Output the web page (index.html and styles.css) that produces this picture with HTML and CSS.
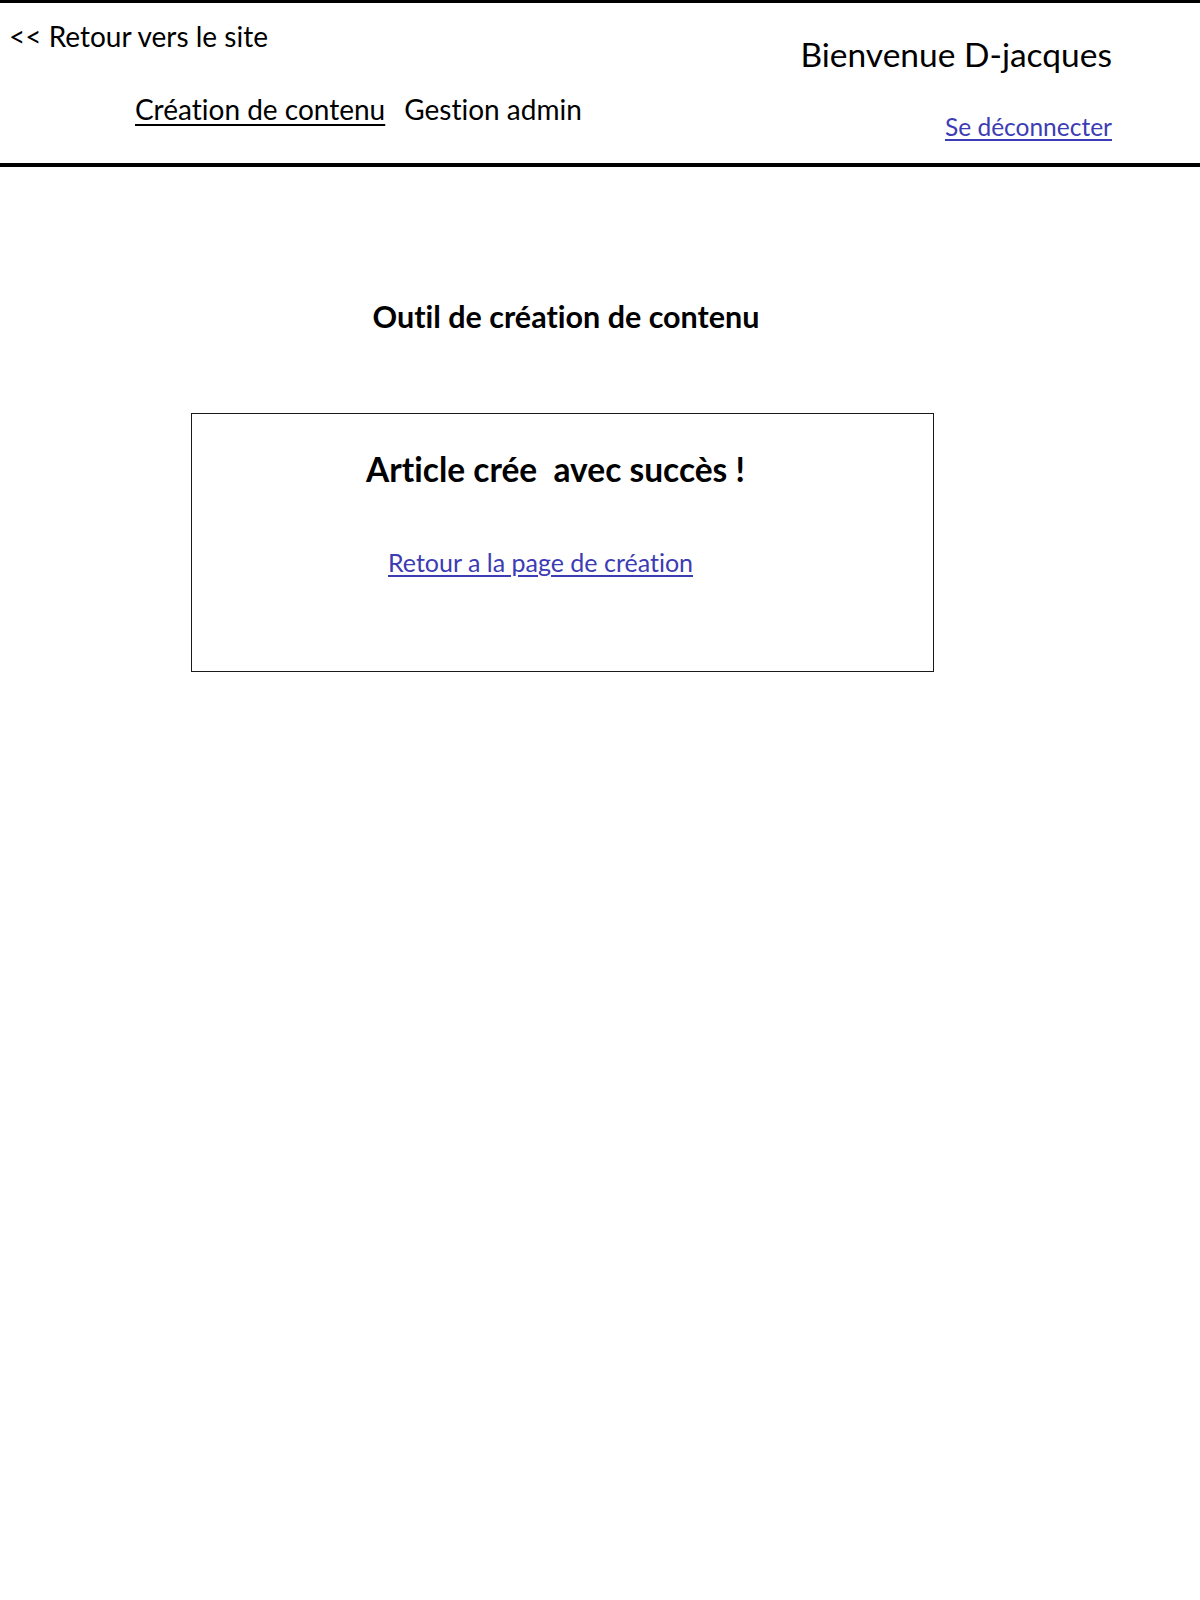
FILE: index.html
```html
<!DOCTYPE html>
<html lang="fr">
<head>
<meta charset="utf-8">
<title>Outil de création de contenu</title>
<link rel="stylesheet" href="styles.css">
</head>
<body>
<header class="topbar">
  <div class="topbar-left">
    <a class="back-link" href="#">&lt;&lt; Retour vers le site</a>
    <nav class="main-nav">
      <a class="nav-item nav-item--active" href="#">Création de contenu</a>
      <a class="nav-item" href="#">Gestion admin</a>
    </nav>
  </div>
  <div class="topbar-right">
    <div class="welcome">Bienvenue D-jacques</div>
    <a class="logout" href="#">Se déconnecter</a>
  </div>
</header>
<main class="content">
  <h1 class="page-title">Outil de création de contenu</h1>
  <section class="result-box">
    <h2 class="result-title">Article crée&nbsp; avec succès !</h2>
    <a class="result-link" href="#">Retour a la page de création</a>
  </section>
</main>
</body>
</html>
```
FILE: styles.css
```css
html, body {
  margin: 0;
  padding: 0;
  background: #ffffff;
  color: #000000;
  font-family: Lato, "Open Sans", "Liberation Sans", sans-serif;
  font-variant-ligatures: none;
  font-feature-settings: "liga" 0;
}

a {
  color: inherit;
  text-decoration: none;
}

.topbar {
  display: flex;
  justify-content: space-between;
  height: 160px;
  border-top: 3px solid #000;
  border-bottom: 4px solid #000;
  box-sizing: content-box;
}

.topbar-left {
  display: flex;
  flex-direction: column;
  align-items: flex-start;
  padding-top: 16px;
  padding-left: 9px;
}

.back-link {
  font-size: 28px;
  line-height: 34px;
  white-space: nowrap;
}

.main-nav {
  display: flex;
  gap: 19px;
  margin-top: 39px;
  margin-left: 126px;
}

.nav-item {
  font-size: 28px;
  line-height: 34px;
  white-space: nowrap;
}

.nav-item--active {
  text-decoration: underline;
  text-underline-offset: 4px;
  text-decoration-thickness: 2px;
}

.topbar-right {
  display: flex;
  flex-direction: column;
  align-items: flex-end;
  padding-top: 31px;
  padding-right: 88px;
}

.welcome {
  font-size: 33.5px;
  line-height: 40px;
  white-space: nowrap;
}

.logout {
  margin-top: 38px;
  font-size: 24.5px;
  line-height: 30px;
  color: #3c3cb4;
  text-decoration: underline;
  text-underline-offset: 3px;
  white-space: nowrap;
}

.content {
  width: 743px;
  margin-left: 191px;
  padding-top: 131px;
}

.page-title {
  margin: 0;
  padding-left: 7px;
  font-size: 30.5px;
  line-height: 36px;
  font-weight: 700;
  text-align: center;
}

.result-box {
  margin-top: 79px;
  border: 1px solid #1a1a1a;
  display: flex;
  flex-direction: column;
  align-items: flex-start;
  padding-top: 35px;
  box-sizing: border-box;
  height: 259px;
}

.result-title {
  align-self: stretch;
  margin: 0;
  padding-right: 14px;
  font-size: 33.5px;
  line-height: 40px;
  font-weight: 700;
  text-align: center;
}

.result-link {
  margin-top: 58px;
  margin-left: 196px;
  font-size: 25px;
  line-height: 30px;
  color: #3c3cb4;
  text-decoration: underline;
  text-underline-offset: 3px;
}
```
